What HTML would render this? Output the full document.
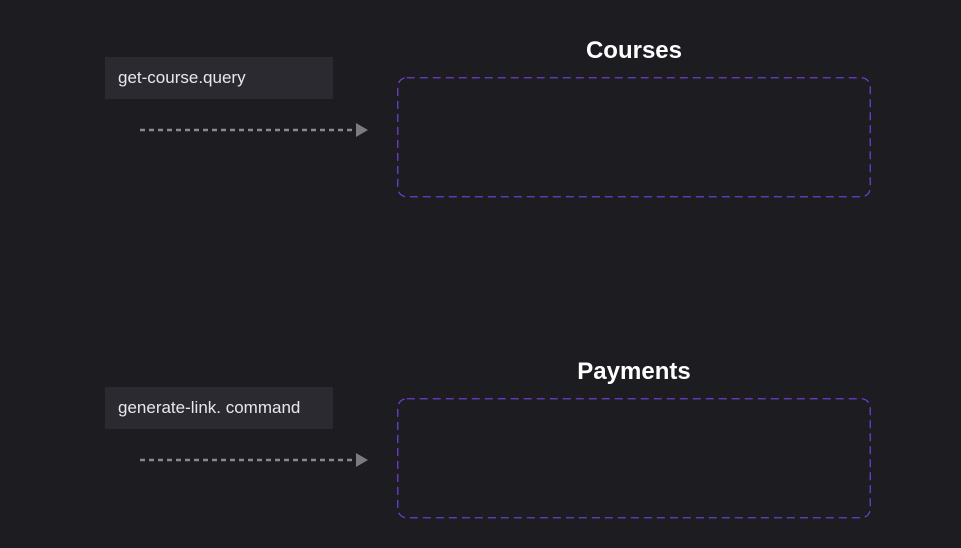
<!DOCTYPE html>
<html><head><style>
body{margin:0;width:961px;height:548px;background:#1d1c21;position:relative;overflow:hidden;font-family:"Liberation Sans",sans-serif}
.lbl{position:absolute;left:105px;width:228px;height:42px;background:#2b2a31;color:#e8e8ec;font-size:17px;line-height:42px;padding-left:13px;box-sizing:border-box}
.t{position:absolute;left:397px;width:474px;text-align:center;color:#fff;font-weight:bold;font-size:24px}
svg{position:absolute;left:0;top:0}
</style></head><body>
<div class="lbl" style="top:57px">get-course.query</div>
<div class="t" style="top:37px">Courses</div>
<div class="lbl" style="top:387px">generate-link. command</div>
<div class="t" style="top:358px">Payments</div>
<svg width="961" height="548">
<g fill="none" stroke="#6a3fd0" stroke-width="1.3" stroke-dasharray="8,5">
<rect x="397.75" y="77.75" width="472.5" height="119" rx="9"/>
<rect x="397.75" y="398.75" width="472.5" height="119" rx="9"/>
</g>
<g stroke="#8a8a8e" stroke-width="2.5" stroke-dasharray="5,4">
<line x1="140" y1="130" x2="355" y2="130"/>
<line x1="140" y1="460" x2="355" y2="460"/>
</g>
<g fill="#7c7c80">
<polygon points="356,123 368,130 356,137"/>
<polygon points="356,453 368,460 356,467"/>
</g>
</svg>
</body></html>
